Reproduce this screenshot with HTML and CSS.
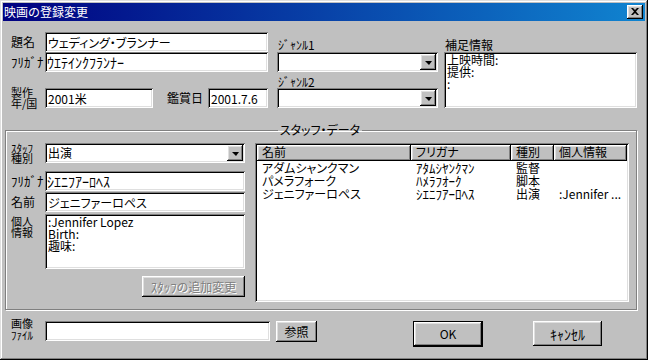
FILE: index.html
```html
<!DOCTYPE html>
<html lang="ja">
<head>
  <meta charset="UTF-8">
  <title>映画の登録変更</title>
  <link rel="stylesheet" href="styles.css">
</head>
<body>
  <div class="window">
    <div class="titlebar">
      <span class="title">映画の登録変更</span>
      <button class="close">
        <svg width="8" height="7" viewBox="0 0 8 7"><path d="M0 0h2l2 2 2-2h2L5 3.5 8 7H6L4 5 2 7H0l3-3.5z"/></svg>
      </button>
    </div>

    <div class="client">
      <div class="top">
        <div class="col-main">
          <div class="row">
            <label class="lbl">題名</label>
            <input class="field w-title" value="ウェディング・ブランナー">
          </div>
          <div class="row">
            <label class="lbl hw">ﾌﾘｶﾞﾅ</label>
            <input class="field w-title hw-field" value="ｳｴﾃｲﾝｸﾌﾗﾝﾅｰ">
          </div>
          <div class="row row-made">
            <label class="lbl two">製作<br>年/国</label>
            <input class="field w-country" value="2001米">
            <label class="lbl-date">鑑賞日</label>
            <input class="field w-date" value="2001.7.6">
          </div>
        </div>

        <div class="col-genre">
          <div class="cap cap-first">ｼﾞｬﾝﾙ1</div>
          <div class="combo"><span class="combo-text"></span><span class="drop"></span></div>
          <div class="cap cap-second">ｼﾞｬﾝﾙ2</div>
          <div class="combo"><span class="combo-text"></span><span class="drop"></span></div>
        </div>

        <div class="col-note">
          <div class="cap cap-first">補足情報</div>
          <textarea class="field note">上映時間:
提供:
:</textarea>
        </div>
      </div>

      <fieldset class="group">
        <legend>スタッフ・データ</legend>

        <div class="staff">
          <div class="row">
            <label class="lbl two tight">ｽﾀｯﾌ<br>種別</label>
            <div class="combo w-staff"><span class="combo-text">出演</span><span class="drop"></span></div>
          </div>
          <div class="row row-furi">
            <label class="lbl hw">ﾌﾘｶﾞﾅ</label>
            <input class="field w-staff hw-field" value="ｼｴﾆﾌｱｰﾛﾍｽ">
          </div>
          <div class="row row-name">
            <label class="lbl">名前</label>
            <input class="field w-staff" value="ジェニファーロペス">
          </div>
          <div class="row row-info">
            <label class="lbl two">個人<br>情報</label>
            <textarea class="field w-staff info">:Jennifer Lopez
Birth:
趣味:</textarea>
          </div>
          <div class="row-btn">
            <button class="btn btn-add" disabled><span class="hw">ｽﾀｯﾌ</span>の追加変更</button>
          </div>
        </div>

        <div class="list">
          <div class="list-head">
            <span>名前</span>
            <span>フリガナ</span>
            <span>種別</span>
            <span>個人情報</span>
          </div>
          <div class="list-row">
            <span>アダムシャンクマン</span><span class="hw">ｱﾀﾑｼﾔﾝｸﾏﾝ</span><span>監督</span><span></span>
          </div>
          <div class="list-row">
            <span>パメラフォーク</span><span class="hw">ﾊﾒﾗﾌｵｰｸ</span><span>脚本</span><span></span>
          </div>
          <div class="list-row">
            <span>ジェニファーロペス</span><span class="hw">ｼｴﾆﾌｱｰﾛﾍｽ</span><span>出演</span><span>:Jennifer ...</span>
          </div>
        </div>
      </fieldset>

      <div class="bottom">
        <label class="lbl two file-lbl">画像<br>ﾌｧｲﾙ</label>
        <input class="field w-file" value="">
        <button class="btn btn-ref">参照</button>
        <button class="btn btn-ok">OK</button>
        <button class="btn btn-cancel">ｷｬﾝｾﾙ</button>
      </div>
    </div>
  </div>
</body>
</html>
```

FILE: styles.css
```css
:root {
  --face: #c0c0c0;
  --shade: #808080;
  --light: #dfdfdf;
  --raised: inset -1px -1px #000, inset 1px 1px #fff, inset -2px -2px #808080, inset 2px 2px #dfdfdf;
  --sunken: inset 1px 1px #808080, inset -1px -1px #fff, inset 2px 2px #000, inset -2px -2px #dfdfdf;
}

* {
  box-sizing: border-box;
  margin: 0;
  padding: 0;
}

body {
  width: 648px;
  height: 360px;
  overflow: hidden;
  background: var(--face);
  font-family: "Noto Sans CJK JP", "Liberation Sans", sans-serif;
  font-size: 12px;
  line-height: 12px;
  font-feature-settings: "palt";
  color: #000;
}

/* half-width katakana sit a bit larger than the full-width text */
.hw {
  font-size: 13px;
}

.window {
  width: 648px;
  height: 360px;
  background: var(--face);
  padding: 3px 2px 2px;
  box-shadow: inset -1px -1px #000, inset 1px 1px #dfdfdf, inset -2px -2px #808080, inset 2px 2px #fff;
}

/* title bar */
.titlebar {
  height: 18px;
  margin: 0 1px;
  padding: 0 2px 0 1px;
  display: flex;
  align-items: center;
  justify-content: space-between;
  background: linear-gradient(to right, #000080, #1084d0);
}

.title {
  color: #fff;
  font-size: 12px;
  font-feature-settings: normal;
}

.close {
  width: 16px;
  height: 14px;
  border: none;
  background: var(--face);
  box-shadow: var(--raised);
  display: flex;
  align-items: center;
  justify-content: center;
  padding-bottom: 1px;
}

/* shared controls */
.row {
  display: flex;
  align-items: center;
  height: 20px;
}

.lbl {
  width: 34px;
  flex: none;
  white-space: nowrap;
}

.lbl.two {
  font-size: 11px;
  line-height: 11px;
}

.field {
  height: 20px;
  border: none;
  outline: none;
  background: #fff;
  box-shadow: var(--sunken);
  padding: 0 3px;
  font: inherit;
  font-feature-settings: "palt";
  color: #000;
}

.field.hw-field {
  font-size: 14px;
  padding-left: 2px;
}

textarea.field {
  resize: none;
  overflow: hidden;
  padding: 2px 3px;
  line-height: 12px;
}

.combo {
  height: 20px;
  display: flex;
  padding: 2px;
  background: #fff;
  box-shadow: var(--sunken);
}

.combo-text {
  flex: 1;
  line-height: 16px;
  padding-left: 1px;
}

.drop {
  width: 16px;
  background: var(--face);
  box-shadow: var(--raised);
  display: flex;
  align-items: center;
  justify-content: center;
}

.drop::before {
  content: '';
  border-left: 4px solid transparent;
  border-right: 3px solid transparent;
  border-top: 4px solid #000;
  margin-top: 1px;
}

.btn {
  border: none;
  background: var(--face);
  box-shadow: var(--raised);
  font: inherit;
  font-feature-settings: "palt";
  color: #000;
}

/* top section */
.client {
  padding-top: 11px;
}

.top {
  display: flex;
  height: 76px;
  margin-left: 9px;
}

.col-main {
  width: 257px;
  display: flex;
  flex-direction: column;
}

.w-title {
  width: 223px;
}

.row-made {
  margin-top: 16px;
}

.w-country {
  width: 108px;
}

.lbl-date {
  margin-left: 14px;
  width: 41px;
}

.w-date {
  width: 60px;
}

.col-genre {
  width: 161px;
  margin-left: 9px;
  display: flex;
  flex-direction: column;
}

.cap {
  white-space: nowrap;
}

.cap-first {
  height: 20px;
  padding: 7px 0 0 1px;
}

.cap-second {
  height: 16px;
  padding: 4px 0 0 1px;
}

.col-note {
  width: 193px;
  margin-left: 6px;
  display: flex;
  flex-direction: column;
}

.note {
  height: 56px;
}

/* staff group */
.group {
  width: 632px;
  margin: 15px 0 0 3px;
  border: 1px solid var(--shade);
  box-shadow: inset 1px 1px #fff, 1px 1px #fff;
  padding: 6px 7px 7px 5px;
  display: flex;
  gap: 10px;
}

.group legend {
  margin: 0 auto;
  padding: 0 2px;
  line-height: 14px;
}

.staff {
  width: 234px;
  display: flex;
  flex-direction: column;
}

.w-staff {
  width: 200px;
}

.lbl.tight {
  line-height: 10px;
  align-self: flex-start;
}

.row-furi {
  margin-top: 8px;
}

.row-name {
  margin-top: 1px;
}

.row-info {
  margin-top: 2px;
  height: 55px;
  align-items: flex-start;
}

.row-info .lbl {
  margin-top: 2px;
}

.info {
  height: 55px;
}

.row-btn {
  margin-top: 7px;
  display: flex;
  justify-content: flex-end;
}

.btn-add {
  width: 103px;
  height: 21px;
  color: var(--shade);
  text-shadow: 1px 1px #fff;
}

/* list view */
.list {
  width: 374px;
  height: 159px;
  padding: 2px;
  background: #fff;
  box-shadow: var(--sunken);
}

.list-head,
.list-row {
  display: grid;
  grid-template-columns: 154px 100px 43px 73px;
}

.list-head span {
  height: 16px;
  line-height: 14px;
  padding-left: 5px;
  background: var(--face);
  box-shadow: var(--raised);
}

.list-row span {
  height: 13px;
  line-height: 13px;
  padding-left: 5px;
  white-space: nowrap;
}

/* bottom row */
.bottom {
  display: flex;
  align-items: flex-start;
  margin: 7px 0 0 9px;
}

.lbl.file-lbl {
  line-height: 12px;
}

.w-file {
  width: 225px;
  margin-top: 4px;
}

.btn-ref {
  width: 41px;
  height: 21px;
  margin: 4px 0 0 6px;
}

.btn-ok {
  width: 70px;
  height: 26px;
  margin: 4px 0 0 96px;
  border: 1px solid #000;
}

.btn-cancel {
  width: 69px;
  height: 25px;
  margin: 4px 0 0 50px;
  font-size: 14px;
}
```
